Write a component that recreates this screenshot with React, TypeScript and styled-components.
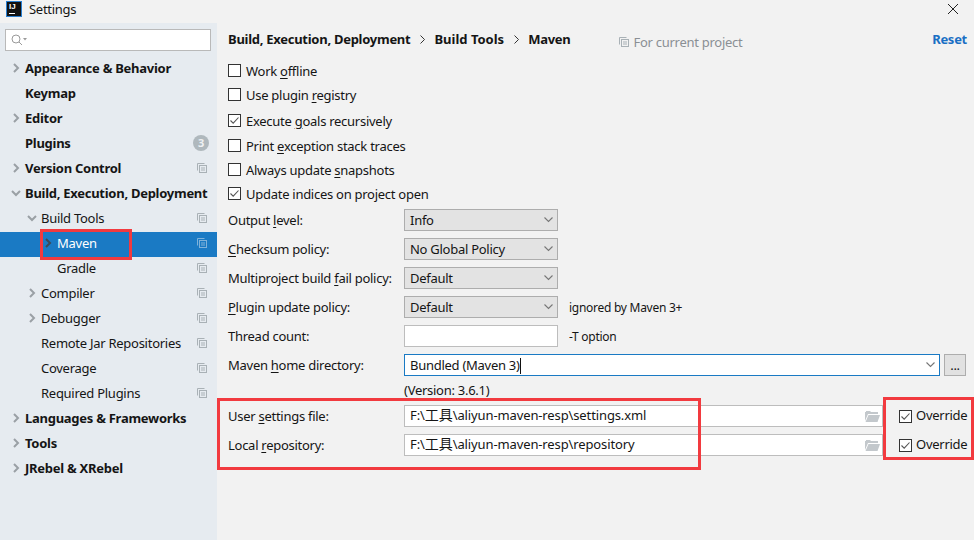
import React from 'react'
import styled, { createGlobalStyle } from 'styled-components'

const GlobalStyle = createGlobalStyle`
  html, body {
    margin: 0;
    padding: 0;
    background: #f2f2f2;
  }
  body {
    font-family: "Noto Sans", "Noto Sans CJK SC", sans-serif;
    font-size: 13px;
    letter-spacing: -0.27px;
    color: #151515;
  }
  u {
    text-underline-offset: 2px;
  }
`

const Window = styled.div`
  position: relative;
  width: 974px;
  height: 540px;
  overflow: hidden;
  display: flex;
  flex-direction: column;
  background: #f2f2f2;
`

const TitleBar = styled.div`
  height: 23px;
  flex: none;
  display: flex;
  align-items: center;
  padding: 0 15px 6px 6px;
  box-sizing: border-box;
`

const Logo = styled.div`
  width: 16px;
  height: 16px;
  box-sizing: border-box;
  background: #111;
  border: 1px solid #2a7fd0;
  color: #fff;
  font: bold 8px/9px "Liberation Sans", sans-serif;
  letter-spacing: 0;
  padding-left: 2px;
  position: relative;
  &::after {
    content: '';
    position: absolute;
    left: 2px;
    bottom: 2px;
    width: 6px;
    height: 1px;
    background: #fff;
  }
`

const WindowTitle = styled.span`
  margin-left: 7px;
  flex: 1;
`

const Body = styled.div`
  flex: 1;
  display: flex;
  min-height: 0;
`

const Sidebar = styled.aside`
  width: 217px;
  flex: none;
  background: #e6ebf0;
  padding-top: 6px;
  box-sizing: border-box;
`

const SearchBox = styled.div`
  margin: 0 6px 6px 5px;
  height: 22px;
  box-sizing: border-box;
  background: #fff;
  border: 1px solid #b9b9b9;
  display: flex;
  align-items: center;
  padding-left: 5px;
`

const TreeRow = styled.div<{ $level: number; $selected?: boolean; $bold?: boolean }>`
  height: 25px;
  box-sizing: border-box;
  display: flex;
  align-items: center;
  padding-left: ${(p) => 25 + p.$level * 16}px;
  padding-right: 10px;
  padding-bottom: 3px;
  position: relative;
  background: ${(p) => (p.$selected ? '#1a7ac4' : 'transparent')};
  color: ${(p) => (p.$selected ? '#fff' : '#151515')};
  font-weight: ${(p) => (p.$bold ? 700 : 400)};
  white-space: nowrap;
`

const TreeLabel = styled.span`
  flex: 1;
`

const Arrow = styled.svg<{ $level: number }>`
  position: absolute;
  left: ${(p) => 11 + p.$level * 16}px;
  top: 6px;
  width: 10px;
  height: 10px;
`

const Badge = styled.span`
  width: 16px;
  height: 16px;
  border-radius: 50%;
  background: #afb8bd;
  color: #eef1f3;
  font-size: 11px;
  line-height: 16px;
  text-align: center;
  margin-right: -2px;
`

const Main = styled.main`
  flex: 1;
  min-width: 0;
  padding: 5px 8px 0 11px;
  box-sizing: border-box;
`

const Crumbs = styled.div`
  height: 22px;
  display: flex;
  align-items: center;
  font-weight: 700;
  white-space: nowrap;
`

const LooseCrumb = styled.span`
  letter-spacing: 0;
`

const CrumbArrow = styled.svg`
  width: 7px;
  height: 9px;
  margin: 0 8px 0 9px;
  flex: none;
`

const ProjectHint = styled.span`
  margin-left: 49px;
  display: flex;
  align-items: center;
  gap: 4px;
  font-weight: 400;
  color: #8a8f94;
  flex: 1;
  padding-top: 6px;
`

const ResetLink = styled.a`
  color: #1a6fc4;
  font-weight: 700;
  margin-right: -1px;
`

const CheckRow = styled.label<{ $push?: number }>`
  height: 24px;
  margin-top: ${(p) => p.$push ?? 0}px;
  display: flex;
  align-items: center;
  gap: 5px;
  white-space: nowrap;
`

const CheckText = styled.span`
  padding-top: 2px;
`

const CheckList = styled.div`
  margin-top: 8px;
`

const Box = styled.span`
  width: 13px;
  height: 13px;
  flex: none;
  box-sizing: border-box;
  border: 1px solid #333;
  background: #fff;
  display: flex;
  align-items: center;
  justify-content: center;
`

const Form = styled.div`
  margin-top: 4px;
  display: flex;
  flex-direction: column;
  gap: 7px;
`

const FormRow = styled.div`
  display: grid;
  grid-template-columns: 176px 1fr;
  align-items: center;
  height: 22px;
  white-space: nowrap;
`

const FieldLine = styled.div`
  display: flex;
  align-items: center;
  height: 22px;
`

const Select = styled.div`
  width: 154px;
  height: 22px;
  box-sizing: border-box;
  background: #e3e3e3;
  border: 1px solid #adadad;
  display: flex;
  align-items: center;
  justify-content: space-between;
  padding: 0 4px 0 5px;
`

const Input = styled.div<{ $focused?: boolean; $grow?: boolean }>`
  flex: ${(p) => (p.$grow ? 1 : 'none')};
  width: ${(p) => (p.$grow ? 'auto' : '154px')};
  height: 22px;
  box-sizing: border-box;
  background: #fff;
  border: 1px solid ${(p) => (p.$focused ? '#1a7ac4' : '#bdbdbd')};
  display: flex;
  align-items: center;
  justify-content: space-between;
  padding: 0 2px 0 5px;
`

const PathText = styled.span`
  letter-spacing: -0.12px;
  line-height: 18px;
  padding-bottom: 2px;
`

const Cjk = styled.span`
  font-family: "Noto Sans CJK SC", sans-serif;
  font-size: 14px;
  line-height: 1;
  letter-spacing: 0;
`

const Caret = styled.span`
  display: inline-block;
  width: 1px;
  height: 16px;
  background: #111;
  vertical-align: middle;
`

const ComboArrow = styled.span`
  display: flex;
  margin-right: 2px;
`

const Note = styled.span`
  margin-left: 11px;
  font-size: 12px;
`

const MoreButton = styled.div`
  width: 22px;
  height: 22px;
  margin-left: 4px;
  box-sizing: border-box;
  background: #e1e1e1;
  border: 1px solid #adadad;
  text-align: center;
  line-height: 20px;
  flex: none;
`

const VersionLine = styled.div`
  margin: -1px 0 0 176px;
  height: 16px;
  line-height: 16px;
`

const OverrideCheck = styled.label`
  width: 83px;
  flex: none;
  display: flex;
  align-items: center;
  gap: 4px;
  padding-left: 16px;
  box-sizing: border-box;
`

const OverrideText = styled.span`
  padding-bottom: 2px;
`

const RedFrame = styled.div<{ $x: number; $y: number; $w: number; $h: number }>`
  position: absolute;
  left: ${(p) => p.$x}px;
  top: ${(p) => p.$y}px;
  width: ${(p) => p.$w}px;
  height: ${(p) => p.$h}px;
  box-sizing: border-box;
  border: 3px solid #f23a3f;
  pointer-events: none;
`

function Chevron({ open, level, dark }: { open?: boolean; level: number; dark?: boolean }) {
  return (
    <Arrow $level={level} viewBox='0 0 10 10'>
      <path
        d={open ? 'M1 3 L5 7 L9 3' : 'M3 1 L7 5 L3 9'}
        fill='none'
        stroke={dark ? '#3c4a56' : '#9aa0a5'}
        strokeWidth='2'
      />
    </Arrow>
  )
}

function CopyIcon({ color = '#a9b1b6' }: { color?: string }) {
  return (
    <svg width='10' height='10' viewBox='0 0 10 10' style={{ flex: 'none' }}>
      <path d='M0.5 7.5 V0.5 H7.5' fill='none' stroke={color} />
      <rect x='2.5' y='2.5' width='7' height='7' fill='none' stroke={color} />
      <path d='M4 5 H8 M4 7 H8' stroke={color} />
    </svg>
  )
}

function DownArrow() {
  return (
    <svg width='9' height='6' viewBox='0 0 9 6'>
      <path d='M0.5 0.5 L4.5 4.5 L8.5 0.5' fill='none' stroke='#777' strokeWidth='1.1' />
    </svg>
  )
}

function FolderIcon() {
  return (
    <svg width='15' height='12' viewBox='0 0 15 12'>
      <path d='M0 2 H1 V1 H5 L6 2 H13 V4 H3 L0 11 Z' fill='#c3c8cc' />
      <path d='M3.5 5 H15 L12.5 12 H0.5 Z' fill='#c3c8cc' />
    </svg>
  )
}

function TickBox({ checked }: { checked?: boolean }) {
  return (
    <Box>
      {checked && (
        <svg width='11' height='11' viewBox='0 0 11 11'>
          <path d='M1.5 5.5 L4.2 8.2 L9.5 2.5' fill='none' stroke='#555' strokeWidth='1.1' />
        </svg>
      )}
    </Box>
  )
}

const tree = [
  { label: 'Appearance & Behavior', level: 0, bold: true, arrow: 'closed' },
  { label: 'Keymap', level: 0, bold: true },
  { label: 'Editor', level: 0, bold: true, arrow: 'closed' },
  { label: 'Plugins', level: 0, bold: true, badge: '3' },
  { label: 'Version Control', level: 0, bold: true, arrow: 'closed', copy: true },
  { label: 'Build, Execution, Deployment', level: 0, bold: true, arrow: 'open' },
  { label: 'Build Tools', level: 1, arrow: 'open', copy: true },
  { label: 'Maven', level: 2, arrow: 'closed', copy: true, selected: true },
  { label: 'Gradle', level: 2, copy: true },
  { label: 'Compiler', level: 1, arrow: 'closed', copy: true },
  { label: 'Debugger', level: 1, arrow: 'closed', copy: true },
  { label: 'Remote Jar Repositories', level: 1, copy: true },
  { label: 'Coverage', level: 1, copy: true },
  { label: 'Required Plugins', level: 1, copy: true },
  { label: 'Languages & Frameworks', level: 0, bold: true, arrow: 'closed' },
  { label: 'Tools', level: 0, bold: true, arrow: 'closed' },
  { label: 'JRebel & XRebel', level: 0, bold: true, arrow: 'closed' },
]

export default function App() {
  return (
    <Window>
      <GlobalStyle />
      <TitleBar>
        <Logo>IJ</Logo>
        <WindowTitle>Settings</WindowTitle>
        <svg width='12' height='12' viewBox='0 0 12 12'>
          <path d='M1 1 L11 11 M11 1 L1 11' stroke='#222' strokeWidth='1' />
        </svg>
      </TitleBar>
      <Body>
        <Sidebar>
          <SearchBox>
            <svg width='16' height='12' viewBox='0 0 16 12'>
              <circle cx='5' cy='5' r='4' fill='none' stroke='#9a9a9a' />
              <path d='M8 8 L11 11' stroke='#9a9a9a' />
              <path d='M12 4 H16 L14 6.5 Z' fill='#9a9a9a' />
            </svg>
          </SearchBox>
          {tree.map((item) => (
            <TreeRow key={item.label} $level={item.level} $bold={item.bold} $selected={item.selected}>
              {item.arrow && <Chevron level={item.level} open={item.arrow === 'open'} dark={item.selected} />}
              <TreeLabel>{item.label}</TreeLabel>
              {item.copy && <CopyIcon color={item.selected ? '#7fb2da' : '#a9b1b6'} />}
              {item.badge && <Badge>{item.badge}</Badge>}
            </TreeRow>
          ))}
        </Sidebar>
        <Main>
          <Crumbs>
            Build, Execution, Deployment
            <CrumbArrow viewBox='0 0 7 9'>
              <path d='M1.5 0.5 L5.5 4.5 L1.5 8.5' fill='none' stroke='#333' />
            </CrumbArrow>
            <LooseCrumb>Build Tools</LooseCrumb>
            <CrumbArrow viewBox='0 0 7 9'>
              <path d='M1.5 0.5 L5.5 4.5 L1.5 8.5' fill='none' stroke='#333' />
            </CrumbArrow>
            Maven
            <ProjectHint>
              <CopyIcon />
              For current project
            </ProjectHint>
            <ResetLink>Reset</ResetLink>
          </Crumbs>
          <CheckList>
            <CheckRow><TickBox /><CheckText>Work <u>o</u>ffline</CheckText></CheckRow>
            <CheckRow><TickBox /><CheckText>Use plugin <u>r</u>egistry</CheckText></CheckRow>
            <CheckRow $push={2}><TickBox checked /><CheckText>Execute <u>g</u>oals recursively</CheckText></CheckRow>
            <CheckRow $push={1}><TickBox /><CheckText>Print <u>e</u>xception stack traces</CheckText></CheckRow>
            <CheckRow><TickBox /><CheckText>Always update <u>s</u>napshots</CheckText></CheckRow>
            <CheckRow><TickBox checked /><CheckText>Update indices on project open</CheckText></CheckRow>
          </CheckList>
          <Form>
            <FormRow>
              <span>Output <u>l</u>evel:</span>
              <FieldLine><Select>Info<DownArrow /></Select></FieldLine>
            </FormRow>
            <FormRow>
              <span><u>C</u>hecksum policy:</span>
              <FieldLine><Select>No Global Policy<DownArrow /></Select></FieldLine>
            </FormRow>
            <FormRow>
              <span>Multiproject build <u>f</u>ail policy:</span>
              <FieldLine><Select>Default<DownArrow /></Select></FieldLine>
            </FormRow>
            <FormRow>
              <span><u>P</u>lugin update policy:</span>
              <FieldLine>
                <Select>Default<DownArrow /></Select>
                <Note>ignored by Maven 3+</Note>
              </FieldLine>
            </FormRow>
            <FormRow>
              <span>Thread count:</span>
              <FieldLine>
                <Input />
                <Note>-T option</Note>
              </FieldLine>
            </FormRow>
            <FormRow>
              <span>Maven <u>h</u>ome directory:</span>
              <FieldLine>
                <Input $focused $grow>
                  <span>Bundled (Maven 3)<Caret /></span>
                  <ComboArrow><DownArrow /></ComboArrow>
                </Input>
                <MoreButton>...</MoreButton>
              </FieldLine>
            </FormRow>
            <VersionLine>(Version: 3.6.1)</VersionLine>
            <FormRow>
              <span>User <u>s</u>ettings file:</span>
              <FieldLine>
                <Input $grow>
                  <PathText>F:\<Cjk>工具</Cjk>\aliyun-maven-resp\settings.xml</PathText>
                  <FolderIcon />
                </Input>
                <OverrideCheck><TickBox checked /><OverrideText>Override</OverrideText></OverrideCheck>
              </FieldLine>
            </FormRow>
            <FormRow>
              <span>Local <u>r</u>epository:</span>
              <FieldLine>
                <Input $grow>
                  <PathText>F:\<Cjk>工具</Cjk>\aliyun-maven-resp\repository</PathText>
                  <FolderIcon />
                </Input>
                <OverrideCheck><TickBox checked /><OverrideText>Override</OverrideText></OverrideCheck>
              </FieldLine>
            </FormRow>
          </Form>
        </Main>
      </Body>
      <RedFrame $x={40} $y={229} $w={92} $h={31} />
      <RedFrame $x={217} $y={398} $w={484} $h={72} />
      <RedFrame $x={883} $y={397} $w={91} $h={63} />
    </Window>
  )
}
